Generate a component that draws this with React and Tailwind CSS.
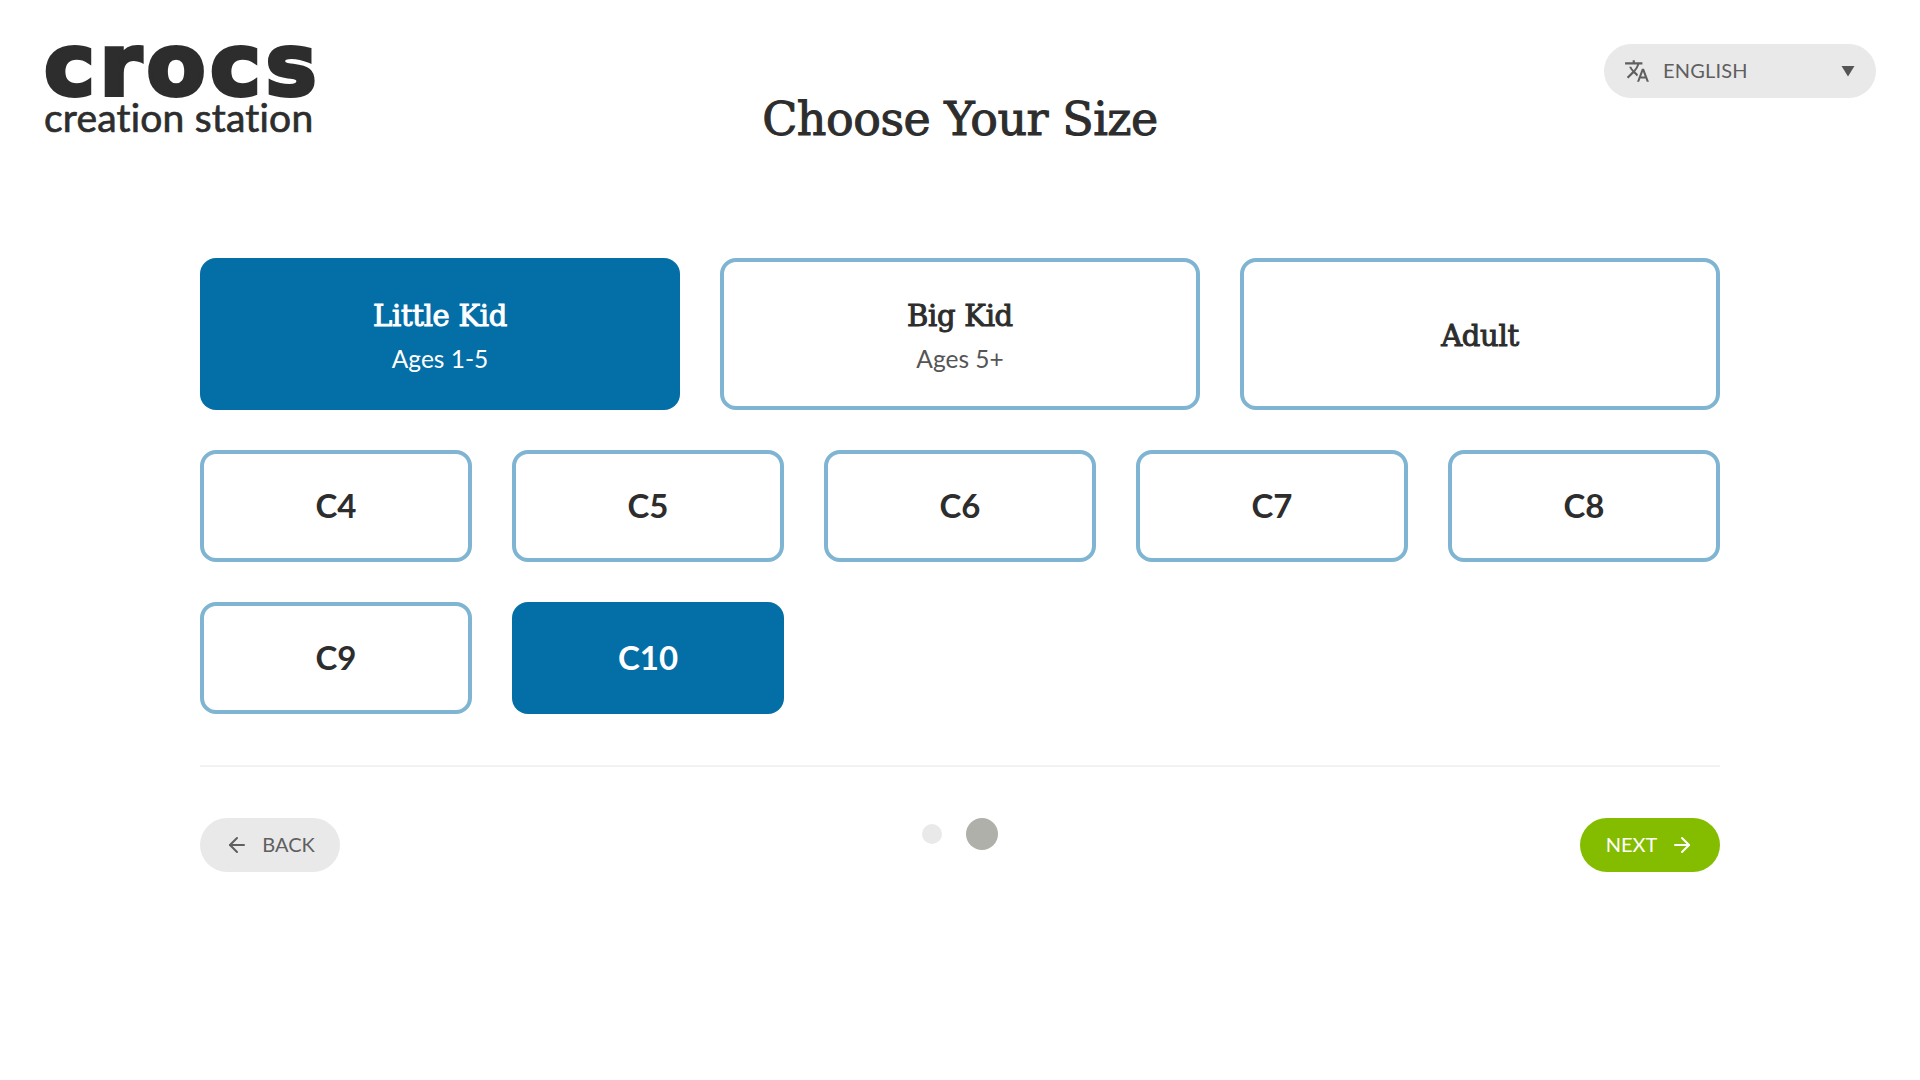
import { ArrowLeft, ArrowRight } from "lucide-react";
import { MdTranslate } from "react-icons/md";

const slab = "font-['DejaVu_Serif','Liberation_Serif',serif]";
const sans = "font-['Lato','Open_Sans',sans-serif]";

const groups = [
  { title: "Little Kid", sub: "Ages 1-5", active: true },
  { title: "Big Kid", sub: "Ages 5+" },
  { title: "Adult" },
];

const sizes = ["C4", "C5", "C6", "C7", "C8", "C9", "C10"];

export default function App() {
  return (
    <div className={`w-[1920px] h-[1080px] bg-white text-[#2d2d2d] ${sans}`}>
      <header className="h-[258px] px-[44px] pt-[44px] grid grid-cols-[1fr_auto_1fr] items-start">
        <Logo />
        <h1 className={`mt-[44px] text-[46px] leading-[62px] font-normal tracking-[-0.5px] [-webkit-text-stroke:1px_#2d2d2d] ${slab}`}>
          Choose Your Size
        </h1>
        <button className="justify-self-end w-[272px] h-[54px] rounded-full bg-[#e9e9e9] pl-5 pr-[21px] flex items-center text-[#5f5f5f]">
          <MdTranslate className="w-[26px] h-[26px]" />
          <span className="ml-[13px] mb-[2px] text-[20px] tracking-[0.2px]">ENGLISH</span>
          <svg className="ml-auto" width="14" height="12" viewBox="0 0 14 12">
            <path d="M0.5 1h13L7 11.5z" fill="#555" />
          </svg>
        </button>
      </header>

      <main className="w-[1520px] mx-auto">
        <div className="grid grid-cols-3 gap-10">
          {groups.map((g) => (
            <Choice key={g.title} active={g.active} className="h-[152px] pt-[3px]">
              <div className={`text-[29px] leading-[38px] tracking-[-0.3px] [-webkit-text-stroke:1px_currentColor] ${slab}`}>{g.title}</div>
              {g.sub && (
                <div className={`mt-[8px] text-[24.5px] leading-[32px] ${g.active ? "text-white" : "text-[#555]"}`}>{g.sub}</div>
              )}
            </Choice>
          ))}
        </div>

        <div className="mt-10 grid grid-cols-5 gap-10">
          {sizes.map((s) => (
            <Choice key={s} active={s === "C10"} className="h-[112px]">
              <span className="text-[33px] font-bold">{s}</span>
            </Choice>
          ))}
        </div>

        <div className="mt-[51px] border-t-2 border-[#f2f2f2]" />

        <div className="mt-[51px] flex items-start justify-between">
          <button className="w-[140px] h-[54px] rounded-full bg-[#e9e9e9] flex items-center justify-center gap-[13px] text-[#5f5f5f]">
            <ArrowLeft size={24} strokeWidth={2} />
            <span className="mb-[2px] text-[20px]">BACK</span>
          </button>
          <div className="flex items-center gap-[24px]">
            <span className="w-5 h-5 rounded-full bg-[#e9e9e9]" />
            <span className="w-8 h-8 rounded-full bg-[#afb0aa]" />
          </div>
          <button className="w-[140px] h-[54px] rounded-full bg-[#84bd00] flex items-center justify-center gap-[13px] text-white">
            <span className="mb-[2px] text-[20px]">NEXT</span>
            <ArrowRight size={24} strokeWidth={2} />
          </button>
        </div>
      </main>
    </div>
  );
}

function Choice({ active, className, children }) {
  return (
    <button
      className={`flex flex-col items-center justify-center rounded-[16px] ${className} ${
        active ? "bg-[#046ea6] text-white" : "bg-white border-4 border-[#7fb4d2] text-[#2d2d2d]"
      }`}
    >
      {children}
    </button>
  );
}

function Logo() {
  return (
    <div className="w-[290px]">
      <div className="-mt-[6px] h-[54px] text-[86px] leading-[54px] tracking-[4.5px] font-['DejaVu_Sans',sans-serif] font-bold [-webkit-text-stroke:4px_#2d2d2d]">
        crocs
      </div>
      <div className="mt-[6px] text-[39px] leading-[38px] tracking-[0.2px] font-normal [-webkit-text-stroke:0.7px_#2d2d2d]">creation station</div>
    </div>
  );
}
